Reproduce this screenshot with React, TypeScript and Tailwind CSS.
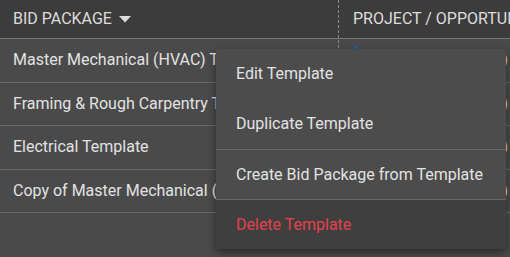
import React from "react";

const rows = [
  { name: "Master Mechanical (HVAC) Template", project: "Riverside Medical (Phase 1)" },
  { name: "Framing & Rough Carpentry Template", project: "Oakwood Apts (Bldg B)" },
  { name: "Electrical Template", project: "Harbor View (Fitout)" },
  { name: "Copy of Master Mechanical (HVAC) Template", project: "Lakeside School (Addition)" },
];

const MenuItem: React.FC<{ label: string; danger?: boolean; divider?: boolean }> = ({
  label,
  danger,
  divider,
}) => (
  <div
    className={`flex h-[50px] items-center px-5 text-[16px] ${
      danger ? "bg-[#3f3f3f] text-[#e5414d]" : "text-[#e2e2e2]"
    } ${divider ? "border-t border-[#6a6a6a]" : ""}`}
  >
    {label}
  </div>
);

const App: React.FC = () => {
  return (
    <div
      className="relative h-[257px] w-[510px] overflow-hidden bg-[#4a4a4a]"
      style={{ fontFamily: "Roboto, 'Liberation Sans', sans-serif" }}
    >
      {/* header */}
      <div className="flex h-[39px] border-b border-[#777777] bg-[#3c3c3c] text-[16px] text-[#dcdcdc]">
        <div className="flex w-[338px] shrink-0 items-center gap-[7px] pl-[13px]">
          <span>BID PACKAGE</span>
          <svg width="12" height="7" viewBox="0 0 12 7" className="mt-[1px]">
            <path d="M0 0 L12 0 L6 6.5 Z" fill="#dcdcdc" />
          </svg>
        </div>
        <div className="relative flex min-w-0 flex-1 items-center">
          <div className="absolute left-0 top-0 z-10 h-[48px] border-l border-dashed border-[#8a8a8a]" />
          <span className="overflow-hidden whitespace-nowrap pl-[15px]">PROJECT / OPPORTUNITY</span>
        </div>
      </div>

      {/* rows */}
      {rows.map((r, i) => (
        <div
          key={r.name}
          className="flex h-[43.5px] items-center border-b border-[#6a6a6a] text-[16px] text-[#e2e2e2]"
        >
          <div className="w-[338px] shrink-0 overflow-hidden whitespace-nowrap pl-[13px]">{r.name}</div>
          <div className="relative flex h-full min-w-0 flex-1 items-center justify-end whitespace-nowrap pr-[2px]">
            {i === 0 && <div className="absolute left-[16px] top-[7px] h-[4px] w-[4px] bg-[#1f5f9e]" />}
            <span>{r.project}</span>
          </div>
        </div>
      ))}

      {/* context menu */}
      <div className="absolute left-[216px] top-[49px] z-20 w-[290px] overflow-hidden rounded-[2px] bg-[#4c4c4c] shadow-[0_3px_8px_rgba(0,0,0,0.45)]">
        <MenuItem label="Edit Template" />
        <MenuItem label="Duplicate Template" />
        <MenuItem label="Create Bid Package from Template" divider />
        <MenuItem label="Delete Template" danger divider />
      </div>
    </div>
  );
};

export default App;
